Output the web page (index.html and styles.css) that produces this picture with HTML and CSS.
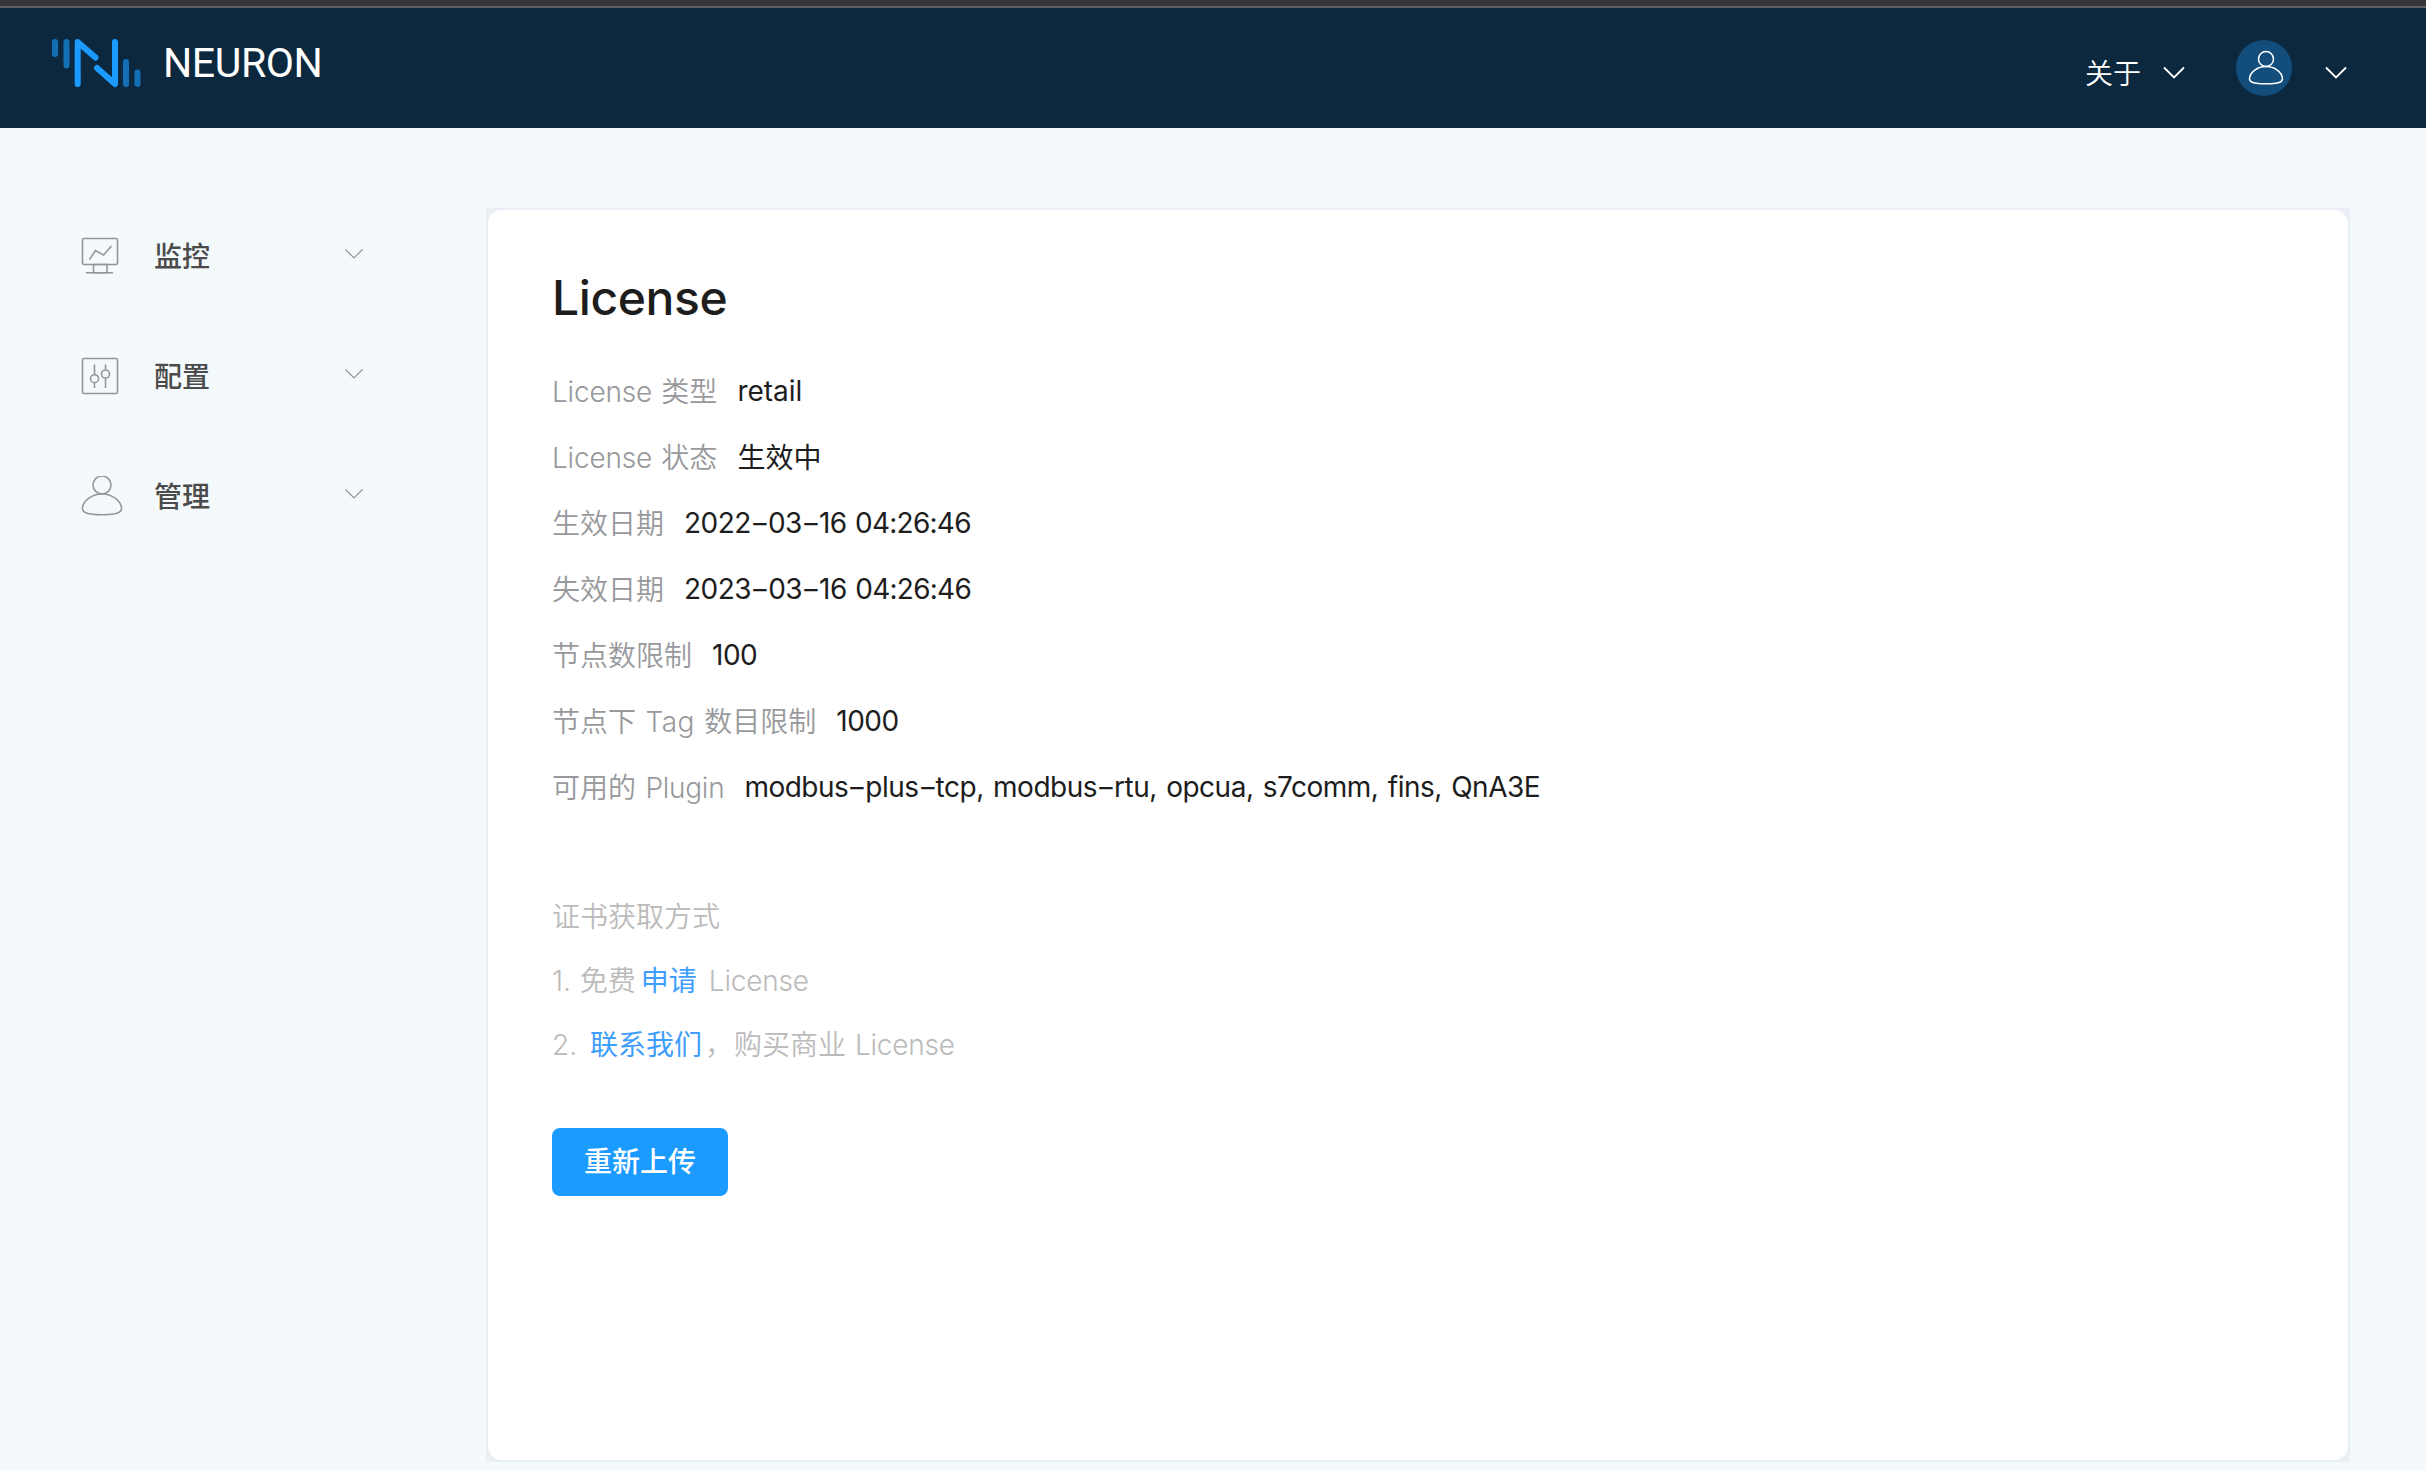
FILE: index.html
```html
<!DOCTYPE html>
<html lang="zh-CN">
<head>
<meta charset="utf-8">
<title>Neuron - License</title>
<link rel="stylesheet" href="styles.css">
</head>
<body>
<div class="strip"></div>
<header class="topbar">
  <div class="brand">
    <svg class="logo" width="90" height="50" viewBox="0 0 90 50" fill="none" stroke-width="6" stroke-linecap="round" stroke-linejoin="round">
      <path d="M4 4v12M15.500 4v23.500M75 24v22M86.500 34.500v11.500" stroke="#1470b5"/>
      <path d="M26.700 46V4L44.500 19.500M46 30L64 46V4" stroke="#1b9aff"/>
    </svg>
    <span class="brand-name">NEURON</span>
  </div>
  <nav class="actions">
    <a class="about">关于</a>
    <svg class="caret" width="22" height="13" viewBox="0 0 22 13"><path d="M1 1.500l10 10 10-10"/></svg>
    <span class="avatar">
      <svg width="36" height="36" viewBox="0 0 36 36"><circle cx="18" cy="9" r="7.500"/><path d="M18 16.500C9.500 16.500 2 22 1.500 28.500C1.300 32 5 33.800 18 33.800S34.700 32 34.500 28.500C34 22 26.500 16.500 18 16.500Z"/></svg>
    </span>
    <svg class="caret caret-user" width="22" height="13" viewBox="0 0 22 13"><path d="M1 1.500l10 10 10-10"/></svg>
  </nav>
</header>
<div class="page">
  <aside class="menu">
    <div class="item">
      <svg class="icon" width="42" height="42" viewBox="0 0 42 42"><rect x="1.500" y="2.500" width="35" height="26" rx="1.500"/><path d="M8.500 23.500L14.500 14.500L22.500 19L30.500 10M12.500 28.500h13.500v8.500H12.500zM5 36.700h27"/></svg>
      <span>监控</span>
      <svg class="arrow" width="18" height="10" viewBox="0 0 18 10"><path d="M.5.500l8.500 8.500L17.500.500"/></svg>
    </div>
    <div class="item">
      <svg class="icon" width="42" height="42" viewBox="0 0 42 42"><rect x="1.500" y="2.500" width="35" height="35" rx="1.500"/><path d="M13.500 8.500v10M13.500 27v5M24.500 8.500v5M24.500 22.500v9.500"/><circle cx="13.500" cy="22.700" r="4"/><circle cx="24.500" cy="18" r="4"/></svg>
      <span>配置</span>
      <svg class="arrow" width="18" height="10" viewBox="0 0 18 10"><path d="M.5.500l8.500 8.500L17.500.500"/></svg>
    </div>
    <div class="item">
      <svg class="icon" width="42" height="42" viewBox="0 0 42 42"><circle cx="21" cy="9" r="9"/><path d="M21 18C11 18 2.500 24.500 1.500 31.500C.8 36.500 6 38.800 21 38.800S41.200 36.500 40.500 31.500C39.500 24.500 31 18 21 18Z"/></svg>
      <span>管理</span>
      <svg class="arrow" width="18" height="10" viewBox="0 0 18 10"><path d="M.5.500l8.500 8.500L17.500.500"/></svg>
    </div>
  </aside>
  <main class="frame">
    <section class="card">
      <h1>License</h1>
      <ul class="info">
        <li><label><i>License</i> 类型</label><span class="val">retail</span></li>
        <li><label><i>License</i> 状态</label><span class="val cjk">生效中</span></li>
        <li><label>生效日期</label><span class="val num">2022<b>-</b>03<b>-</b>16 <span class="time">04:26:46</span></span></li>
        <li><label>失效日期</label><span class="val num">2023<b>-</b>03<b>-</b>16 <span class="time">04:26:46</span></span></li>
        <li><label>节点数限制</label><span class="val num">100</span></li>
        <li><label>节点下 <span class="tag">Tag</span> 数目限制</label><span class="val num">1000</span></li>
        <li><label>可用的 <span class="plugin">Plugin</span></label><span class="val plugins">modbus<b>-</b>plus<b>-</b>tcp, modbus<b>-</b>rtu, opcua, s7comm, fins, QnA3E</span></li>
      </ul>
      <div class="tips">
        <p>证书获取方式</p>
        <p>1. 免费<a class="apply">申请</a><i>License</i></p>
        <p>2. <a class="contact">联系我们</a><span class="comma">，</span>购买商业 <i>License</i></p>
      </div>
      <button class="upload">重新上传</button>
    </section>
  </main>
</div>
</body>
</html>
```

FILE: styles.css
```css
* { box-sizing: border-box; }
body {
  margin: 0;
  height: 1470px;
  overflow: hidden;
  background: #f4f9fc;
  font-family: Inter, "Noto Sans CJK SC", sans-serif;
  font-size: 28px;
  color: #1d1d1d;
}
svg { display: block; flex: none; fill: none; }
i { font-style: normal; letter-spacing: -0.2px; }
.strip { height: 8px; background: #37363b; border-bottom: 2px solid #5f6063; }
.topbar {
  height: 120px;
  background: #0c283e;
  display: flex;
  justify-content: space-between;
  padding: 0 79px 0 51px;
}
.brand { display: flex; padding-top: 30px; }
.brand-name {
  margin-left: 22px;
  font: 400 41px/50px Roboto, sans-serif;
  letter-spacing: -0.4px;
  color: #fff;
}
.actions { display: flex; align-items: flex-start; color: #fff; }
.about { line-height: 40px; margin-top: 46px; font-weight: 350; }
.caret { stroke: #fff; stroke-width: 1.8; margin: 58px 0 0 22px; }
.avatar {
  width: 56px;
  height: 56px;
  margin: 32px 0 0 51px;
  border-radius: 50%;
  background: #124d7c;
  padding: 10px 0 0 12px;
}
.avatar svg { stroke: #fff; stroke-width: 1.5; }
.caret-user { margin-left: 33px; }
.page { display: flex; padding-top: 80px; }
.menu { width: 486px; padding: 0 122px 0 81px; }
.item { height: 120px; display: flex; align-items: flex-start; color: #4b4b4b; font-weight: 500; }
.item span { width: 191px; margin: 29px 0 0 31px; line-height: 40px; }
.icon { margin-top: 28px; stroke: #93979c; stroke-width: 1.6; }
.arrow { margin-top: 41px; stroke: #8f9399; stroke-width: 1.2; }
.frame { width: 1864px; height: 1254px; padding: 2px; background: #ebeff5; }
.card { height: 1250px; border-radius: 14px; background: #fff; padding: 61px 64px 0; }
h1 { margin: 0; font-size: 48px; font-weight: 550; line-height: 54px; letter-spacing: -0.4px; }
.info { margin: 33px 0 0; padding: 0; list-style: none; }
.info li { height: 66px; display: flex; align-items: center; white-space: pre; }
.info label { color: #97999c; font-weight: 350; margin: -2px 20px 0 0; word-spacing: 1.5px; }
.val { word-spacing: 2px; }
.cjk { margin-top: -2px; }
.num { letter-spacing: -0.5px; word-spacing: 1px; }
.time { letter-spacing: -0.75px; }
.tag { letter-spacing: 0.5px; }
.plugin { letter-spacing: -0.25px; }
.plugins { letter-spacing: -0.5px; }
b { display: inline-block; font-weight: inherit; width: 17px; text-align: center; transform: scaleX(1.5); }
.tips { margin-top: 65px; color: #bbbbbb; font-weight: 350; word-spacing: 1px; }
.tips p { margin: 0; height: 64px; line-height: 64px; display: flex; white-space: pre; }
.tips a { color: #409eff; font-weight: 400; }
.apply { margin: 0 12px 0 5px; }
.contact { margin-left: 4px; }
.comma { margin: 0 1px 0 3px; }
.upload {
  display: block;
  width: 176px;
  height: 68px;
  margin-top: 51px;
  padding: 0 0 3px;
  border: 0;
  border-radius: 8px;
  background: #1b9aff;
  color: #fff;
  font: 500 28px/65px "Noto Sans CJK SC", sans-serif;
}
```
